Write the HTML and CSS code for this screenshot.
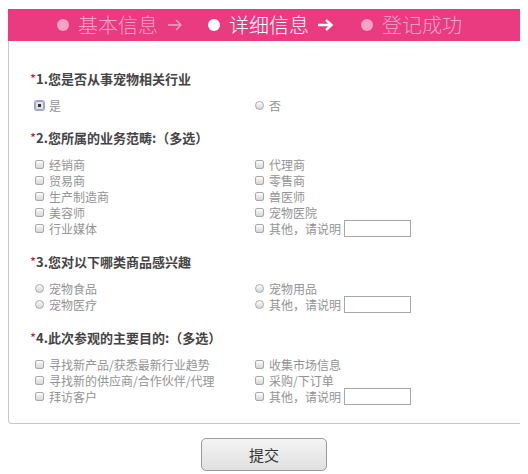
FILE: index.html
```html
<!DOCTYPE html>
<html lang="zh-CN">
<head>
    <meta charset="UTF-8">
    <meta name="viewport" content="width=device-width, initial-scale=1.0">
    <title>详细信息</title>
    <link rel="stylesheet" href="styles.css">
</head>
<body>
    <div class="steps">
        <span class="step"><i class="dot"></i>基本信息</span>
        <svg class="arrow" width="16" height="14" viewBox="0 0 16 14"><path d="M1 7H14M9 2L14 7L9 12" fill="none" stroke="currentColor" stroke-width="1.4"/></svg>
        <span class="step active"><i class="dot"></i>详细信息</span>
        <svg class="arrow active" width="17" height="14" viewBox="0 0 17 14"><path d="M1 7H14.5M9 2L14.5 7L9 12" fill="none" stroke="currentColor" stroke-width="2.4"/></svg>
        <span class="step"><i class="dot"></i>登记成功</span>
    </div>

    <form class="card" id="detailForm">
        <div class="question">
            <h3 class="q-title"><em>*</em>1.您是否从事宠物相关行业</h3>
            <div class="options">
                <label class="opt"><input type="radio" name="pet" value="yes" checked>是</label>
                <label class="opt"><input type="radio" name="pet" value="no">否</label>
            </div>
        </div>

        <div class="question">
            <h3 class="q-title"><em>*</em>2.您所属的业务范畴:（多选）</h3>
            <div class="options">
                <label class="opt"><input type="checkbox" name="biz">经销商</label>
                <label class="opt"><input type="checkbox" name="biz">代理商</label>
                <label class="opt"><input type="checkbox" name="biz">贸易商</label>
                <label class="opt"><input type="checkbox" name="biz">零售商</label>
                <label class="opt"><input type="checkbox" name="biz">生产制造商</label>
                <label class="opt"><input type="checkbox" name="biz">兽医师</label>
                <label class="opt"><input type="checkbox" name="biz">美容师</label>
                <label class="opt"><input type="checkbox" name="biz">宠物医院</label>
                <label class="opt"><input type="checkbox" name="biz">行业媒体</label>
                <label class="opt"><input type="checkbox" name="biz">其他，请说明<input type="text" class="other"></label>
            </div>
        </div>

        <div class="question">
            <h3 class="q-title"><em>*</em>3.您对以下哪类商品感兴趣</h3>
            <div class="options">
                <label class="opt"><input type="radio" name="goods">宠物食品</label>
                <label class="opt"><input type="radio" name="goods">宠物用品</label>
                <label class="opt"><input type="radio" name="goods">宠物医疗</label>
                <label class="opt"><input type="radio" name="goods">其他，请说明<input type="text" class="other"></label>
            </div>
        </div>

        <div class="question">
            <h3 class="q-title"><em>*</em>4.此次参观的主要目的:（多选）</h3>
            <div class="options">
                <label class="opt"><input type="checkbox" name="aim">寻找新产品/获悉最新行业趋势</label>
                <label class="opt"><input type="checkbox" name="aim">收集市场信息</label>
                <label class="opt"><input type="checkbox" name="aim">寻找新的供应商/合作伙伴/代理</label>
                <label class="opt"><input type="checkbox" name="aim">采购/下订单</label>
                <label class="opt"><input type="checkbox" name="aim">拜访客户</label>
                <label class="opt"><input type="checkbox" name="aim">其他，请说明<input type="text" class="other"></label>
            </div>
        </div>
    </form>

    <div class="actions">
        <button type="submit" form="detailForm" class="submit">提交</button>
    </div>
</body>
</html>
```

FILE: styles.css
```css
body {
    margin: 8px;
    background: #fff;
    font-family: "Noto Sans CJK SC", "Noto Sans", sans-serif;
}

.steps {
    height: 32px;
    margin-top: 1px;
    background-color: #ea3a80;
    color: #f6a3c6;
    display: flex;
    align-items: center;
    justify-content: center;
    font-size: 20px;
    font-weight: 300;
    padding-right: 9px;
}

.step {
    display: flex;
    align-items: center;
    gap: 9px;
    line-height: 32px;
}

.step.active {
    color: #fff;
}

.dot {
    width: 12px;
    height: 12px;
    border-radius: 50%;
    background: currentColor;
    display: inline-block;
}

.arrow {
    margin: 0 25px 0 9px;
}

.arrow.active {
    color: #fff;
    margin: 0 27px 0 8px;
}

.card {
    border: 1px solid #c8c8c8;
    border-top: none;
    border-radius: 0 0 4px 4px;
    margin-right: -2px;
    padding: 28px 21px 18px;
}

.question {
    margin-bottom: 15px;
}

.question:last-child {
    margin-bottom: 0;
}

.q-title {
    margin: 0 0 8px;
    font-size: 13px;
    font-weight: bold;
    line-height: 20px;
    color: #444;
}

.q-title em {
    font-style: normal;
    font-weight: normal;
    color: #c8102e;
}

.options {
    display: grid;
    grid-template-columns: 220px auto;
    padding-left: 5px;
}

.opt {
    display: flex;
    align-items: center;
    height: 16px;
    font-size: 12px;
    color: #939393;
}

.opt input[type="checkbox"],
.opt input[type="radio"] {
    appearance: none;
    width: 9px;
    height: 9px;
    margin: 0 5px 0 0;
    border: 1px solid #a9a9a9;
    border-radius: 2px;
    background: linear-gradient(#fdfdfd, #d6d6d6);
}

.opt input[type="radio"] {
    border-radius: 50%;
}

.opt input[type="radio"]:checked {
    background: radial-gradient(circle, #333 0 1.5px, #e4e4e4 2px);
    box-shadow: 0 0 0 1px #8fa9e0;
    border-radius: 2px;
}

.options:first-child .opt:first-child {
    height: 18px;
}

.other {
    width: 67px;
    height: 17px;
    margin-left: 3px;
    padding: 0;
    border: 1px solid #a8a8a8;
    box-sizing: border-box;
}

.opt:has(.other) {
    height: 17px;
}

.actions {
    display: flex;
    justify-content: center;
    margin-top: 14px;
}

.submit {
    width: 126px;
    height: 33px;
    border: 1px solid #9a9a9a;
    border-radius: 5px;
    background: linear-gradient(#f4f4f4, #e0e0e0);
    font-family: "Noto Sans CJK SC", sans-serif;
    font-size: 15px;
    color: #333;
}
```
